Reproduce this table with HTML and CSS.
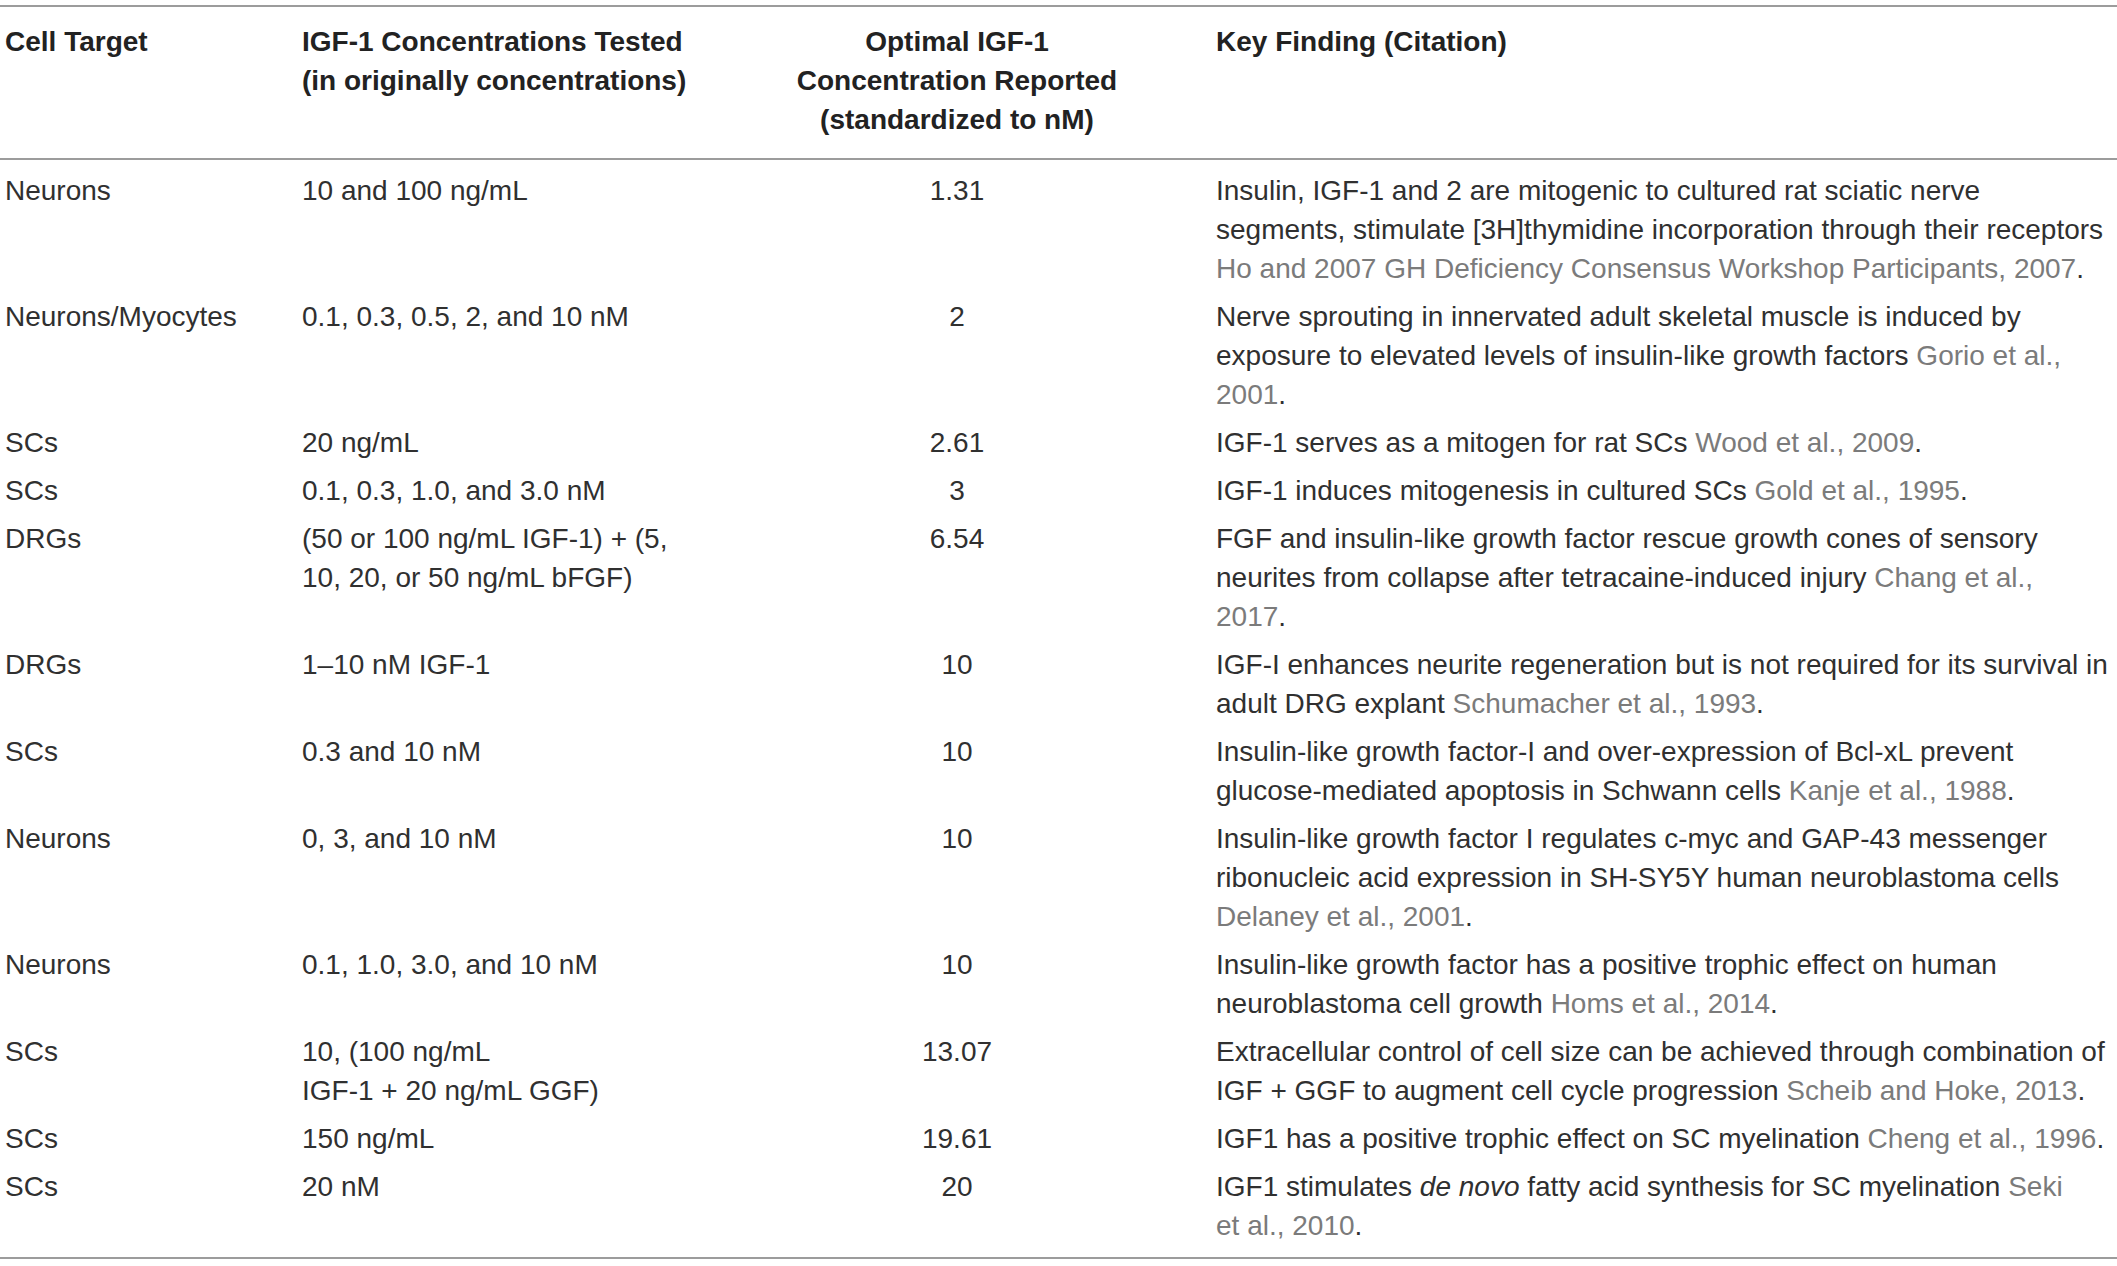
FILE: index.html
```html
<!DOCTYPE html>
<html lang="en">
<head>
  <meta charset="UTF-8">
  <title>IGF-1 concentrations</title>
  <link rel="stylesheet" href="styles.css">
</head>
<body>
  <table class="tabla">
    <colgroup>
      <col class="c-target">
      <col class="c-tested">
      <col class="c-optimal">
      <col class="c-finding">
    </colgroup>
    <thead>
      <tr>
        <th>Cell Target</th>
        <th>IGF-1 Concentrations Tested<br>(in originally concentrations)</th>
        <th class="centro">Optimal IGF-1<br>Concentration Reported<br>(standardized to nM)</th>
        <th>Key Finding (Citation)</th>
      </tr>
    </thead>
    <tbody>
      <tr>
        <td>Neurons</td>
        <td>10 and 100 ng/mL</td>
        <td class="centro">1.31</td>
        <td>Insulin, IGF-1 and 2 are mitogenic to cultured rat sciatic nerve<br>segments, stimulate [3H]thymidine incorporation through their receptors<br><span class="ref">Ho and 2007 GH Deficiency Consensus Workshop Participants, 2007</span>.</td>
      </tr>
      <tr>
        <td>Neurons/Myocytes</td>
        <td>0.1, 0.3, 0.5, 2, and 10 nM</td>
        <td class="centro">2</td>
        <td>Nerve sprouting in innervated adult skeletal muscle is induced by<br>exposure to elevated levels of insulin-like growth factors <span class="ref">Gorio et al.,<br>2001</span>.</td>
      </tr>
      <tr>
        <td>SCs</td>
        <td>20 ng/mL</td>
        <td class="centro">2.61</td>
        <td>IGF-1 serves as a mitogen for rat SCs <span class="ref">Wood et al., 2009</span>.</td>
      </tr>
      <tr>
        <td>SCs</td>
        <td>0.1, 0.3, 1.0, and 3.0 nM</td>
        <td class="centro">3</td>
        <td>IGF-1 induces mitogenesis in cultured SCs <span class="ref">Gold et al., 1995</span>.</td>
      </tr>
      <tr>
        <td>DRGs</td>
        <td>(50 or 100 ng/mL IGF-1) + (5,<br>10, 20, or 50 ng/mL bFGF)</td>
        <td class="centro">6.54</td>
        <td>FGF and insulin-like growth factor rescue growth cones of sensory<br>neurites from collapse after tetracaine-induced injury <span class="ref">Chang et al.,<br>2017</span>.</td>
      </tr>
      <tr>
        <td>DRGs</td>
        <td>1–10 nM IGF-1</td>
        <td class="centro">10</td>
        <td>IGF-I enhances neurite regeneration but is not required for its survival in<br>adult DRG explant <span class="ref">Schumacher et al., 1993</span>.</td>
      </tr>
      <tr>
        <td>SCs</td>
        <td>0.3 and 10 nM</td>
        <td class="centro">10</td>
        <td>Insulin-like growth factor-I and over-expression of Bcl-xL prevent<br>glucose-mediated apoptosis in Schwann cells <span class="ref">Kanje et al., 1988</span>.</td>
      </tr>
      <tr>
        <td>Neurons</td>
        <td>0, 3, and 10 nM</td>
        <td class="centro">10</td>
        <td>Insulin-like growth factor I regulates c-myc and GAP-43 messenger<br>ribonucleic acid expression in SH-SY5Y human neuroblastoma cells<br><span class="ref">Delaney et al., 2001</span>.</td>
      </tr>
      <tr>
        <td>Neurons</td>
        <td>0.1, 1.0, 3.0, and 10 nM</td>
        <td class="centro">10</td>
        <td>Insulin-like growth factor has a positive trophic effect on human<br>neuroblastoma cell growth <span class="ref">Homs et al., 2014</span>.</td>
      </tr>
      <tr>
        <td>SCs</td>
        <td>10, (100 ng/mL<br>IGF-1 + 20 ng/mL GGF)</td>
        <td class="centro">13.07</td>
        <td>Extracellular control of cell size can be achieved through combination of<br>IGF + GGF to augment cell cycle progression <span class="ref">Scheib and Hoke, 2013</span>.</td>
      </tr>
      <tr>
        <td>SCs</td>
        <td>150 ng/mL</td>
        <td class="centro">19.61</td>
        <td>IGF1 has a positive trophic effect on SC myelination <span class="ref">Cheng et al., 1996</span>.</td>
      </tr>
      <tr>
        <td>SCs</td>
        <td>20 nM</td>
        <td class="centro">20</td>
        <td>IGF1 stimulates <i>de novo</i> fatty acid synthesis for SC myelination <span class="ref">Seki<br>et al., 2010</span>.</td>
      </tr>
    </tbody>
  </table>
</body>
</html>
```

FILE: styles.css
```css
body {
  margin: 0;
  background: #fff;
  font-family: "Liberation Sans", Arial, sans-serif;
  color: #303030;
}

.tabla {
  width: 100%;
  margin-top: 5px;
  border-collapse: collapse;
  table-layout: fixed;
  border-top: 2px solid #9c9c9c;
  border-bottom: 2px solid #9c9c9c;
  font-size: 28px;
  line-height: 39px;
}

.c-target { width: 297px; }
.c-tested { width: 406px; }
.c-optimal { width: 508px; }

th, td {
  text-align: left;
  vertical-align: top;
  white-space: nowrap;
  padding: 4px 5px 5px 5px;
}

th {
  font-weight: bold;
  color: #222;
  padding-top: 15px;
  padding-bottom: 19px;
  border-bottom: 2px solid #9c9c9c;
}

tbody tr:first-child td {
  padding-top: 11px;
}

tbody tr:last-child td {
  padding-bottom: 12px;
}

.centro {
  text-align: center;
}

.ref {
  color: #7b7b7b;
}
```
